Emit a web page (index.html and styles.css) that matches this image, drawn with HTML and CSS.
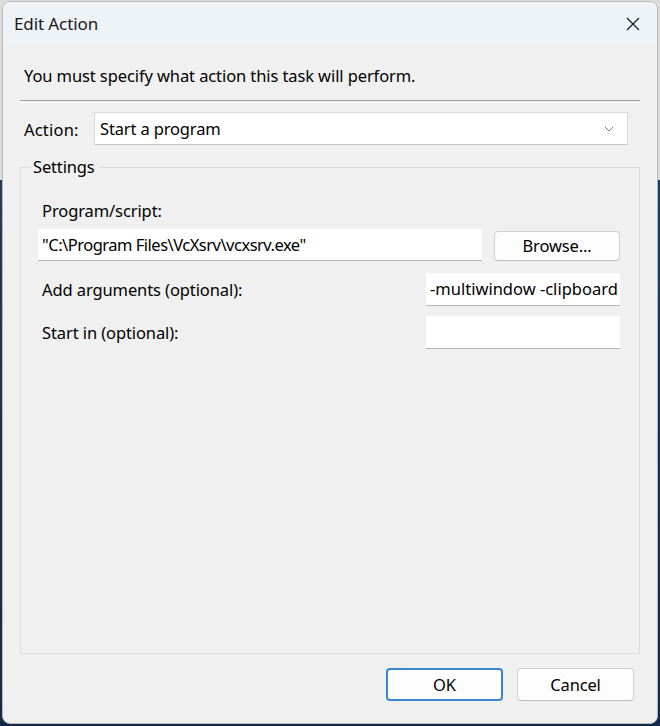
FILE: index.html
```html
<!DOCTYPE html>
<html>
<head>
<meta charset="utf-8">
<link rel="stylesheet" href="styles.css">
</head>
<body>
<div class="window">
  <div class="titlebar">
    <span class="title">Edit Action</span>
    <svg class="close" width="14" height="14" viewBox="0 0 14 14"><path d="M1 1 L13 13 M13 1 L1 13" stroke="#1a1a1a" stroke-width="1.2" fill="none"/></svg>
  </div>
  <div class="content">
    <div class="intro">You must specify what action this task will perform.</div>
    <div class="separator"></div>
    <div class="action-row">
      <span class="label">Action:</span>
      <div class="combo">
        <span>Start a program</span>
        <svg class="chev" width="10" height="6" viewBox="0 0 10 6"><path d="M1 1 L5 5 L9 1" stroke="#7a7a7a" stroke-width="1" fill="none"/></svg>
      </div>
    </div>
    <fieldset class="group">
      <legend>Settings</legend>
      <div class="field-label first">Program/script:</div>
      <div class="prog-row">
        <div class="input prog">"C:\Program Files\VcXsrv\vcxsrv.exe"</div>
        <div class="btn browse">Browse...</div>
      </div>
      <div class="pair-row args">
        <span class="field-label">Add arguments (optional):</span>
        <div class="input small">-multiwindow -clipboard</div>
      </div>
      <div class="pair-row start">
        <span class="field-label">Start in (optional):</span>
        <div class="input small"></div>
      </div>
    </fieldset>
    <div class="buttons">
      <div class="btn dlg ok">OK</div>
      <div class="btn dlg">Cancel</div>
    </div>
  </div>
</div>
</body>
</html>
```
FILE: styles.css
```css
html, body {
  margin: 0;
  padding: 0;
}
body {
  width: 660px;
  height: 726px;
  overflow: hidden;
  background: linear-gradient(to bottom, #dcdcdc 0, #dcdcdc 180px, #1d3b63 180px, #12294a 100%);
  font-family: "Noto Sans", "Open Sans", sans-serif;
  color: #000;
  line-height: 20px;
}
.window {
  box-sizing: border-box;
  margin: 1px 0 0 2px;
  width: 656px;
  height: 723px;
  border: 1px solid #b9b9b9;
  border-radius: 8px;
  background: #f0f0f0;
  overflow: hidden;
  display: flex;
  flex-direction: column;
}
.titlebar {
  height: 45px;
  flex: none;
  display: flex;
  align-items: center;
  justify-content: space-between;
  padding: 0 17px 0 11px;
  background: #eef3f8;
}
.title {
  font-size: 17px;
  letter-spacing: -0.1px;
  color: #1a1a1a;
  margin-top: -1px;
}
.close {
  margin-top: -2px;
}
.content {
  flex: 1;
  display: flex;
  flex-direction: column;
  padding: 0 17px 0 17px;
  font-size: 16.5px;
}
.intro {
  margin-top: 19px;
  padding-left: 4px;
  letter-spacing: -0.1px;
}
.separator {
  margin-top: 14px;
  height: 1px;
  border-top: 1px solid #a0a0a0;
  border-bottom: 1px solid #ffffff;
}
.action-row {
  margin-top: 9px;
  display: flex;
  align-items: center;
  padding-right: 12px;
}
.label {
  padding-left: 4px;
  width: 70px;
  letter-spacing: 0.2px;
  margin-top: 3px;
}
.combo {
  flex: 1;
  height: 33px;
  box-sizing: border-box;
  background: #fff;
  border: 1px solid #d9d9d9;
  border-bottom-color: #c6c6c6;
  display: flex;
  align-items: center;
  justify-content: space-between;
  padding: 0 13px 0 5px;
  letter-spacing: -0.15px;
}
.chev {
  margin-top: 1px;
}
.group {
  margin: 12px 0 0 0;
  padding: 0 19px 0 17px;
  border: 1px solid #dcdcdc;
  height: 497px;
  box-sizing: border-box;
  min-width: 0;
}
.group legend {
  margin-left: -7px;
  padding: 0 3px 0 2px;
  letter-spacing: -0.15px;
}
.field-label {
  padding-left: 4px;
  letter-spacing: -0.1px;
}
.field-label.first {
  margin-top: 24px;
}
.prog-row {
  margin-top: 8px;
  display: flex;
  align-items: flex-start;
  gap: 12px;
}
.input {
  box-sizing: border-box;
  background: #fff;
  border-bottom: 1px solid #b3b3b3;
  display: flex;
  align-items: center;
  padding-left: 4px;
  white-space: nowrap;
  overflow: hidden;
}
.input.prog {
  width: 444px;
  height: 32px;
  letter-spacing: -0.5px;
}
.btn {
  box-sizing: border-box;
  display: flex;
  align-items: center;
  justify-content: center;
  background: #fdfdfd;
  border: 1px solid #d0d0d0;
  border-bottom-color: #bcbcbc;
  border-radius: 4px;
  letter-spacing: -0.15px;
}
.browse {
  margin-top: 2px;
  width: 126px;
  height: 30px;
}
.pair-row {
  display: flex;
  justify-content: space-between;
  align-items: center;
}
.pair-row.args {
  margin-top: 12px;
}
.pair-row.start {
  margin-top: 10px;
}
.input.small {
  width: 194px;
  height: 33px;
  padding-left: 4px;
  letter-spacing: 0px;
}
.buttons {
  margin-top: 14px;
  display: flex;
  justify-content: flex-end;
  gap: 14px;
  padding-right: 6px;
}
.dlg {
  width: 117px;
  height: 33px;
}
.ok {
  border: 2px solid #3a86d0;
}
```
